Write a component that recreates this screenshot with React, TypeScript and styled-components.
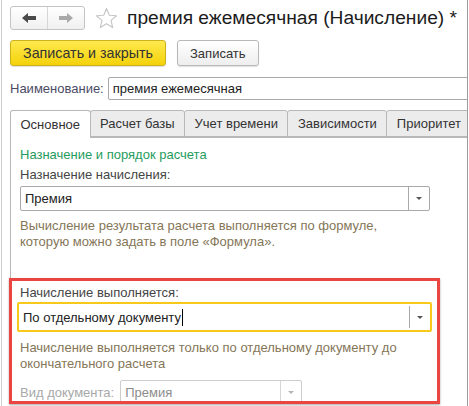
import React from "react";
import styled, { createGlobalStyle } from "styled-components";

const GlobalStyle = createGlobalStyle`
  html, body {
    margin: 0;
    padding: 0;
    background: #ffffff;
  }
  body {
    font-family: "Liberation Sans", Arial, sans-serif;
    font-size: 13px;
    color: #333333;
  }
`;

const Window = styled.div`
  box-sizing: border-box;
  width: 467px;
  height: 406px;
  margin-left: 1px;
  padding-left: 8px;
  border-left: 1px solid #cfcfcf;
  border-right: 1px solid #9c9c9c;
  overflow: hidden;
  background: #ffffff;
`;

const Header = styled.div`
  display: flex;
  align-items: center;
  height: 24px;
  margin-top: 6px;
`;

const NavGroup = styled.div`
  display: flex;
  height: 24px;
  box-sizing: border-box;
  border: 1px solid #c4c4c4;
  border-radius: 3px;
  background: linear-gradient(#ffffff, #f0f0f0);
`;

const NavButton = styled.div<{ $divider?: boolean }>`
  width: 36px;
  display: flex;
  align-items: center;
  justify-content: center;
  border-left: ${(p) => (p.$divider ? "1px solid #d6d6d6" : "none")};
`;

const StarBox = styled.div`
  width: 24px;
  height: 24px;
  margin-left: 9px;
  display: flex;
  align-items: center;
  justify-content: center;
`;

const Title = styled.h1`
  margin: 0 0 0 9px;
  font-size: 19.2px;
  font-weight: normal;
  color: #1c1c1c;
  white-space: nowrap;
  line-height: 24px;
`;

const Toolbar = styled.div`
  display: flex;
  gap: 11px;
  margin-top: 10px;
  height: 26px;
`;

const Button = styled.button<{ $primary?: boolean }>`
  box-sizing: border-box;
  height: 26px;
  padding: 0 12px;
  font-family: inherit;
  font-size: ${(p) => (p.$primary ? "14.3px" : "13px")};
  color: #333333;
  border-radius: 3px;
  border: 1px solid ${(p) => (p.$primary ? "#cdb21e" : "#b8b8b8")};
  background: ${(p) =>
    p.$primary
      ? "linear-gradient(#ffe94f, #f4d20a)"
      : "linear-gradient(#ffffff, #eeeeee)"};
  box-shadow: 0 1px 1px rgba(0, 0, 0, 0.12);
`;

const FieldRow = styled.div`
  display: flex;
  align-items: center;
  margin-top: 11px;
  height: 23px;
`;

const Label = styled.span<{ $tone?: "name" | "disabled" }>`
  white-space: nowrap;
  color: ${(p) =>
    p.$tone === "name" ? "#4b4b66" : p.$tone === "disabled" ? "#a8a8a8" : "#454545"};
`;

const TextInput = styled.div`
  box-sizing: border-box;
  flex: 0 0 380px;
  height: 23px;
  margin-left: 4px;
  padding-left: 4px;
  display: flex;
  align-items: center;
  border: 1px solid #a9a9a9;
  border-radius: 2px;
  color: #222222;
`;

const Tabs = styled.div`
  display: flex;
  margin-top: 10px;
  height: 27px;
  align-items: flex-end;
  position: relative;
  z-index: 1;
`;

const Tab = styled.div<{ $active?: boolean }>`
  box-sizing: border-box;
  height: ${(p) => (p.$active ? "28px" : "27px")};
  margin-bottom: ${(p) => (p.$active ? "-1px" : "0")};
  padding: 0 9.5px;
  margin-left: -1px;
  display: flex;
  align-items: center;
  white-space: nowrap;
  border: 1px solid #b8b8b8;
  border-bottom: ${(p) => (p.$active ? "none" : "1px solid #b8b8b8")};
  border-radius: 3px 3px 0 0;
  background: ${(p) => (p.$active ? "#ffffff" : "#ececec")};
  color: #333333;
  &:first-child {
    margin-left: 0;
  }
`;

const Panel = styled.div`
  border-left: 1px solid #b8b8b8;
  border-top: 1px solid #b8b8b8;
  padding: 9px 0 0 9px;
`;

const SectionTitle = styled.div`
  line-height: 16px;
  color: #1f9c5e;
`;

const FieldLabel = styled.div<{ $first?: boolean }>`
  line-height: 16px;
  margin-top: ${(p) => (p.$first ? "0" : "4px")};
  color: #454545;
`;

const Select = styled.div<{ $width: number; $focused?: boolean; $disabled?: boolean }>`
  box-sizing: border-box;
  width: ${(p) => p.$width}px;
  height: ${(p) => (p.$focused ? "30px" : "25px")};
  display: flex;
  align-items: stretch;
  border: ${(p) =>
    p.$focused
      ? "2px solid #f7c91b"
      : p.$disabled
      ? "1px solid #cdcdcd"
      : "1px solid #a9a9a9"};
  border-radius: 2px;
  color: ${(p) => (p.$disabled ? "#8c8c8c" : "#222222")};
`;

const SelectValue = styled.div`
  flex: 1;
  display: flex;
  align-items: center;
  padding-left: 4px;
`;

const Caret = styled.span`
  display: inline-block;
  width: 1px;
  height: 17px;
  background: #000000;
  margin-left: 1px;
`;

const DropButton = styled.div<{ $focused?: boolean; $disabled?: boolean }>`
  width: 20px;
  display: flex;
  align-items: center;
  justify-content: center;
  margin: ${(p) => (p.$focused ? "2px 0" : "0")};
  border-left: 1px solid ${(p) => (p.$disabled ? "#d6d6d6" : "#a9a9a9")};
  &::after {
    content: "";
    border-left: 3px solid transparent;
    border-right: 3px solid transparent;
    border-top: 3px solid ${(p) => (p.$disabled ? "#b5b5b5" : "#555555")};
  }
`;

const Hint = styled.div<{ $gap: number }>`
  margin-top: ${(p) => p.$gap}px;
  line-height: 16px;
  color: #857658;
`;

const Highlight = styled.div`
  box-sizing: border-box;
  width: 431px;
  height: 126px;
  margin: 28px 0 0 -11px;
  padding: 4px 0 0 8px;
  border: 3px solid #ea4540;
  box-shadow: 0 1px 2px rgba(0, 0, 0, 0.35);
  overflow: hidden;
  background: #ffffff;
`;

const FocusedWrap = styled.div`
  margin: 1px 0 0 -3px;
`;

const InlineRow = styled.div`
  display: flex;
  align-items: center;
  gap: 6px;
  margin-top: 8px;
`;

const SelectSpacer = styled.div`
  margin-top: 3px;
`;

const BackArrow = ({ color }: { color: string }) => (
  <svg width="14" height="10" viewBox="0 0 14 10">
    <path d="M0 5 L6 0 L6 3 L14 3 L14 7 L6 7 L6 10 Z" fill={color} />
  </svg>
);

const ForwardArrow = ({ color }: { color: string }) => (
  <svg width="14" height="10" viewBox="0 0 14 10">
    <path d="M14 5 L8 0 L8 3 L0 3 L0 7 L8 7 L8 10 Z" fill={color} />
  </svg>
);

const StarIcon = () => (
  <svg width="23" height="23" viewBox="0 0 24 24">
    <path
      d="M12 1.5 L14.9 8.6 L22.5 9.1 L16.7 14 L18.5 21.5 L12 17.4 L5.5 21.5 L7.3 14 L1.5 9.1 L9.1 8.6 Z"
      fill="none"
      stroke="#c6c6c6"
      strokeWidth="1.2"
      strokeLinejoin="round"
    />
  </svg>
);

const tabs = ["Основное", "Расчет базы", "Учет времени", "Зависимости", "Приоритет"];

export default function App() {
  return (
    <>
      <GlobalStyle />
      <Window>
        <Header>
          <NavGroup>
            <NavButton>
              <BackArrow color="#4a4a4a" />
            </NavButton>
            <NavButton $divider>
              <ForwardArrow color="#a9a9a9" />
            </NavButton>
          </NavGroup>
          <StarBox>
            <StarIcon />
          </StarBox>
          <Title>премия ежемесячная (Начисление) *</Title>
        </Header>

        <Toolbar>
          <Button $primary>Записать и закрыть</Button>
          <Button>Записать</Button>
        </Toolbar>

        <FieldRow>
          <Label $tone="name">Наименование:</Label>
          <TextInput>премия ежемесячная</TextInput>
        </FieldRow>

        <Tabs>
          {tabs.map((t, i) => (
            <Tab key={t} $active={i === 0}>
              {t}
            </Tab>
          ))}
        </Tabs>

        <Panel>
          <SectionTitle>Назначение и порядок расчета</SectionTitle>
          <FieldLabel>Назначение начисления:</FieldLabel>
          <SelectSpacer>
            <Select $width={410}>
              <SelectValue>Премия</SelectValue>
              <DropButton />
            </Select>
          </SelectSpacer>
          <Hint $gap={7}>
            Вычисление результата расчета выполняется по формуле,
            <br />
            которую можно задать в поле «Формула».
          </Hint>

          <Highlight>
            <FieldLabel $first>Начисление выполняется:</FieldLabel>
            <FocusedWrap>
              <Select $width={415} $focused>
                <SelectValue>
                  По отдельному документу
                  <Caret />
                </SelectValue>
                <DropButton $focused />
              </Select>
            </FocusedWrap>
            <Hint $gap={8}>
              Начисление выполняется только по отдельному документу до
              <br />
              окончательного расчета
            </Hint>
            <InlineRow>
              <Label $tone="disabled">Вид документа:</Label>
              <Select $width={182} $disabled>
                <SelectValue>Премия</SelectValue>
                <DropButton $disabled />
              </Select>
            </InlineRow>
          </Highlight>
        </Panel>
      </Window>
    </>
  );
}
